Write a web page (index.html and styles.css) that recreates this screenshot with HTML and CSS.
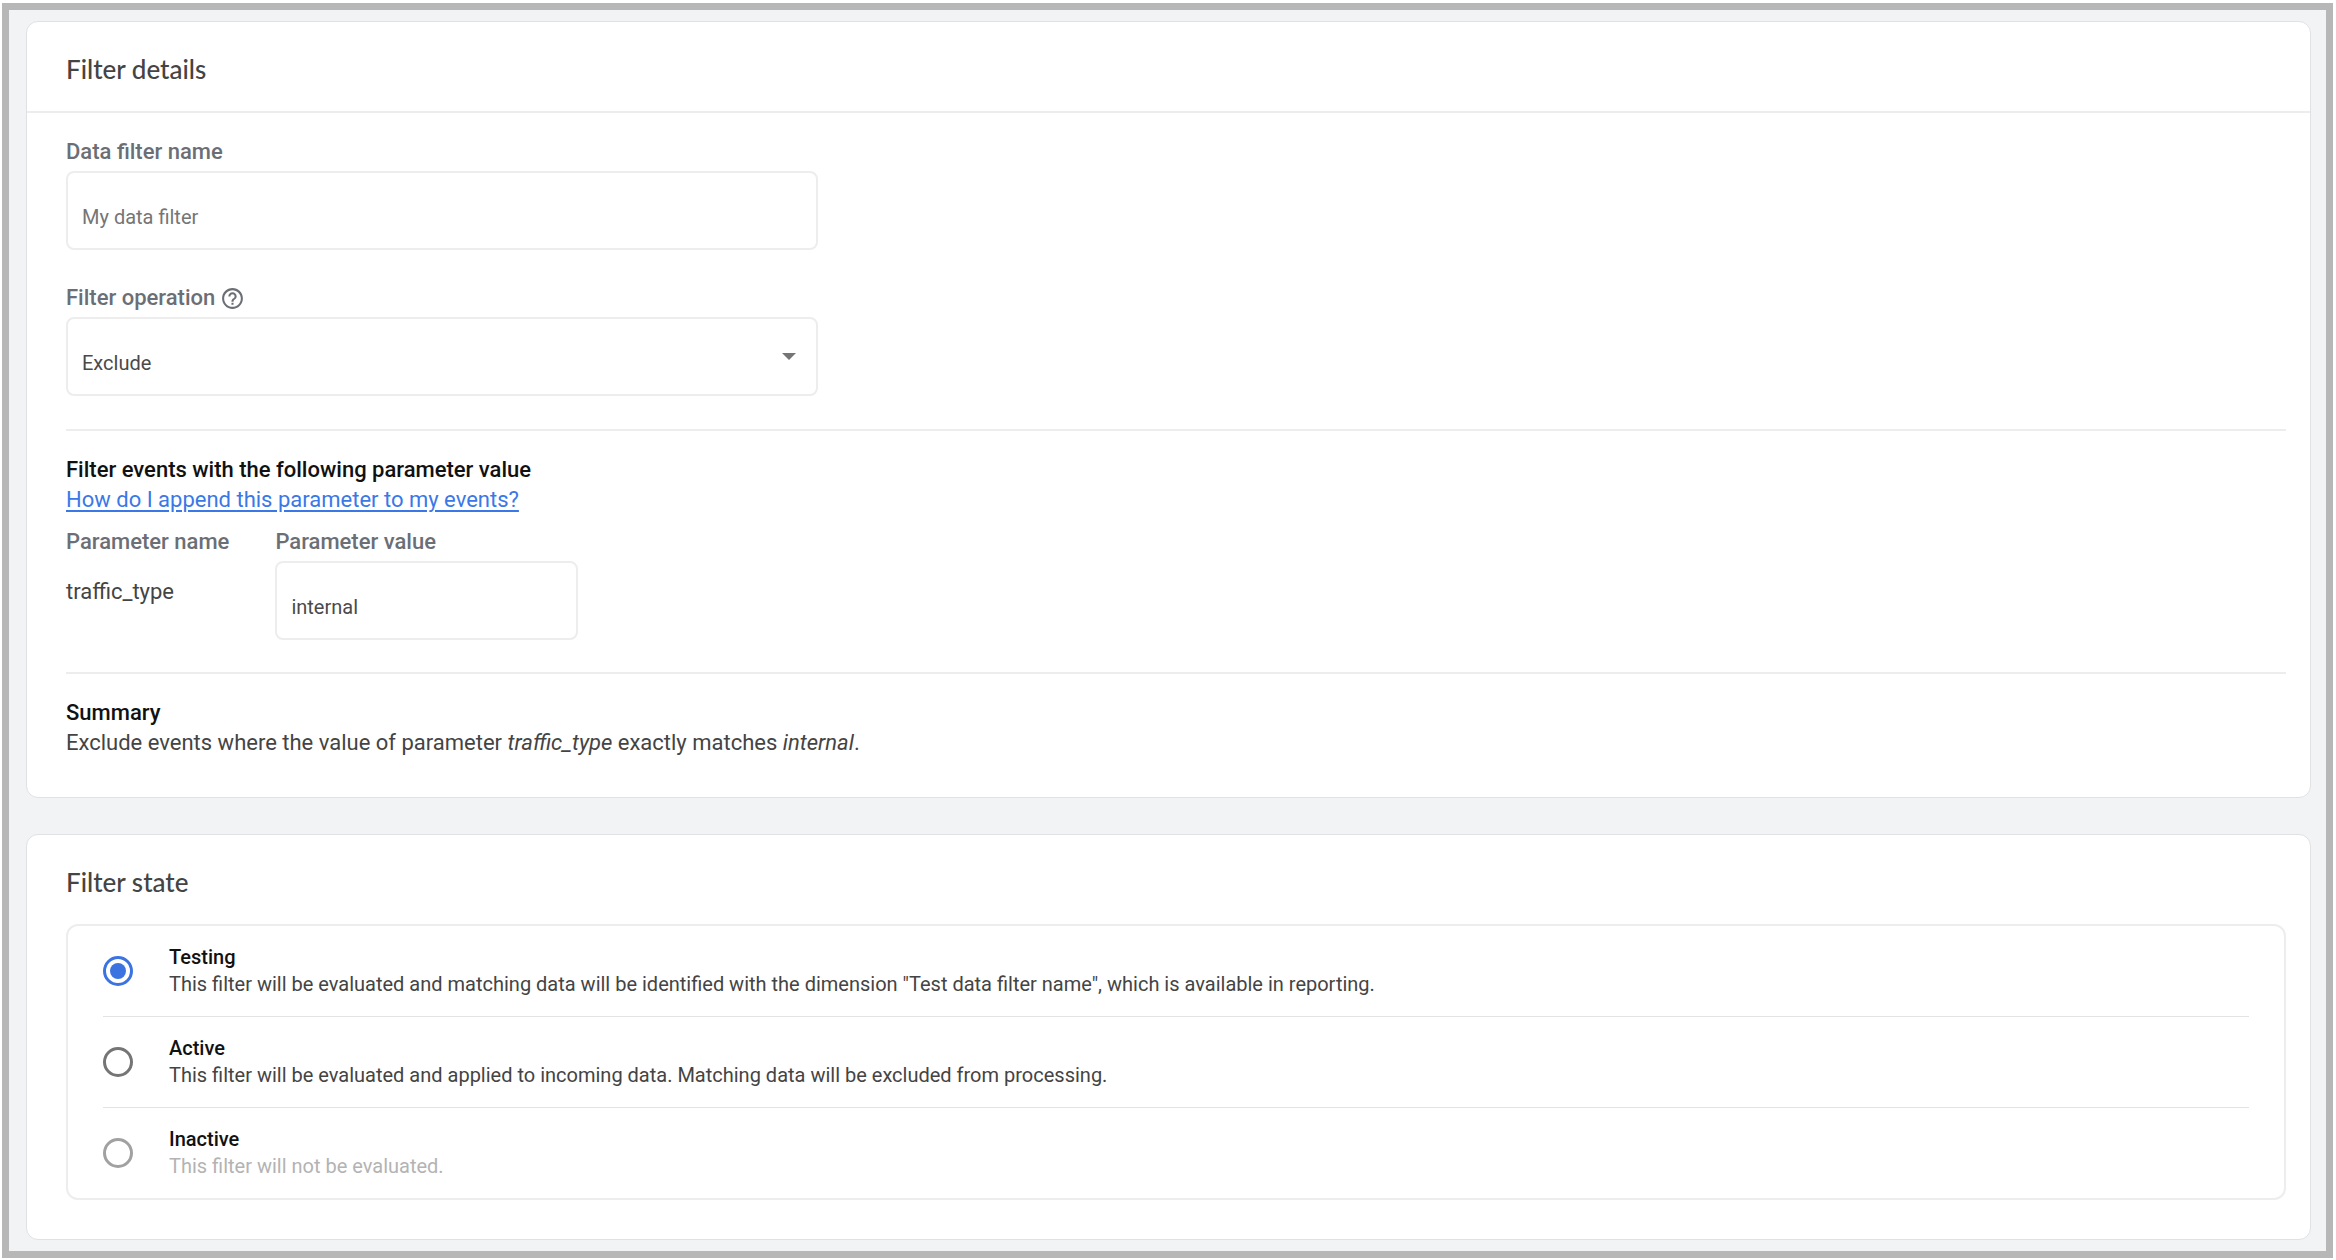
FILE: index.html
```html
<!DOCTYPE html>
<html lang="en">

<head>
    <meta charset="UTF-8">
    <meta name="viewport" content="width=device-width, initial-scale=1.0">
    <title>Data filter</title>
    <link rel="stylesheet" href="styles.css">
</head>

<body>
    <form class="page">
        <section class="card">
            <div class="card-header">
                <h2 class="card-title">Filter details</h2>
            </div>
            <div class="card-body">
                <div class="field">
                    <label class="label" for="filter-name">Data filter name</label>
                    <input class="input" type="text" id="filter-name" placeholder="My data filter">
                </div>
                <div class="field">
                    <div class="label-row">
                        <label class="label" for="filter-operation">Filter operation</label>
                        <button class="help" type="button" aria-label="Help">
                            <svg viewBox="0 0 24 24" width="25" height="25" fill="currentColor">
                                <path d="M11 18h2v-2h-2v2zm1-16C6.480 2 2 6.480 2 12s4.480 10 10 10 10-4.480 10-10S17.520 2 12 2zm0 18c-4.410 0-8-3.590-8-8s3.590-8 8-8 8 3.590 8 8-3.590 8-8 8zm0-14c-2.210 0-4 1.790-4 4h2c0-1.100.9-2 2-2s2 .9 2 2c0 2-3 1.750-3 5h2c0-2.250 3-2.500 3-5 0-2.210-1.790-4-4-4z" />
                            </svg>
                        </button>
                    </div>
                    <div class="select-wrap">
                        <select class="input" id="filter-operation">
                            <option>Exclude</option>
                        </select>
                        <svg class="arrow" viewBox="0 0 14 7" width="14" height="7">
                            <path d="M0 0h14L7 7z" fill="#757575" />
                        </svg>
                    </div>
                </div>

                <div class="group">
                    <h3 class="subtitle">Filter events with the following parameter value</h3>
                    <a class="link" href="#">How do I append this parameter to my events?</a>
                    <div class="params">
                        <div class="param-name">
                            <div class="label">Parameter name</div>
                            <div class="param-text">traffic_type</div>
                        </div>
                        <div class="param-value">
                            <label class="label" for="param-value">Parameter value</label>
                            <input class="input" type="text" id="param-value" value="internal">
                        </div>
                    </div>
                </div>

                <div class="group">
                    <h3 class="subtitle">Summary</h3>
                    <p class="summary">Exclude events where the value of parameter <em>traffic_type</em> exactly matches <em>internal</em>.</p>
                </div>
            </div>
        </section>

        <section class="card">
            <div class="card-header plain">
                <h2 class="card-title">Filter state</h2>
            </div>
            <div class="options">
                <div class="option">
                    <input class="radio" type="radio" name="state" id="testing" checked>
                    <label class="option-label" for="testing">
                        <strong>Testing</strong>
                        <span>This filter will be evaluated and matching data will be identified with the dimension "Test data filter name", which is available in reporting.</span>
                    </label>
                </div>
                <div class="option">
                    <input class="radio" type="radio" name="state" id="active">
                    <label class="option-label" for="active">
                        <strong>Active</strong>
                        <span>This filter will be evaluated and applied to incoming data. Matching data will be excluded from processing.</span>
                    </label>
                </div>
                <div class="option">
                    <input class="radio" type="radio" name="state" id="inactive" disabled>
                    <label class="option-label" for="inactive">
                        <strong>Inactive</strong>
                        <span>This filter will not be evaluated.</span>
                    </label>
                </div>
            </div>
        </section>
    </form>
</body>

</html>
```

FILE: styles.css
```css
* {
    box-sizing: border-box;
}

body {
    margin: 0;
    padding: 3px 3px 2px 2px;
    background-color: #fff;
    color: #444;
    font-family: Roboto, sans-serif;
    font-size: 20px;
    line-height: 30px;
}

.page {
    display: flex;
    flex-direction: column;
    gap: 36px;
    padding: 11px 15px 11px 17px;
    border: 7px solid #b7b7b7;
    background-color: #f1f3f4;
}

.card {
    border: 1px solid #dfe1e5;
    border-radius: 12px;
    background-color: #fff;
}

.card-header {
    padding: 32px 39px 27px;
    border-bottom: 2px solid #ededed;
}

.card-header.plain {
    border-bottom: none;
}

.card-title {
    margin: 0;
    font-family: Lato, sans-serif;
    font-size: 26px;
    font-weight: 500;
}

.card-body {
    padding: 24px 24px 39px 39px;
    font-size: 22px;
}

.field {
    max-width: 752px;
    margin-bottom: 33px;
}

.label-row {
    display: flex;
    align-items: center;
    gap: 5px;
}

.label {
    display: block;
    color: #6b6f75;
    font-weight: 500;
}

.help {
    display: flex;
    padding: 0;
    border: none;
    background: none;
    color: #6b6f75;
    cursor: pointer;
}

.input {
    display: block;
    width: 100%;
    height: 79px;
    margin-top: 4px;
    padding: 12px 14px 0;
    border: 2px solid #ededed;
    border-radius: 8px;
    background-color: #fff;
    color: #4a4a4a;
    font-family: inherit;
    font-size: 20px;
    appearance: none;
}

.input::placeholder {
    color: #757575;
    opacity: 1;
}

.select-wrap {
    position: relative;
}

.arrow {
    position: absolute;
    top: 36px;
    right: 22px;
    pointer-events: none;
}

.group {
    padding-top: 24px;
    border-top: 2px solid #ededed;
}

.subtitle {
    margin: 0;
    color: #111;
    font-size: 22px;
    font-weight: 500;
}

.link {
    color: #3b78e7;
    text-underline-offset: 3px;
}

.params {
    display: flex;
    gap: 46px;
    margin: 12px 0 32px;
}

.param-text {
    margin-top: 20px;
}

.param-value {
    width: 303px;
}

.summary {
    margin: 0;
}

.options {
    margin: 0 24px 39px 39px;
    padding: 0 35px;
    border: 2px solid #ededed;
    border-radius: 12px;
}

.option {
    display: flex;
    align-items: center;
    gap: 36px;
    padding: 18px 0;
    border-bottom: 1px solid #e3e3e3;
}

.option:last-child {
    border-bottom: none;
}

.radio {
    flex: none;
    display: grid;
    place-content: center;
    width: 30px;
    height: 30px;
    margin: 0;
    border: 3px solid #757575;
    border-radius: 50%;
    background-color: #fff;
    appearance: none;
}

.radio:checked {
    border-color: #3b73e0;
}

.radio:checked::before {
    content: "";
    width: 16px;
    height: 16px;
    border-radius: 50%;
    background-color: #3b73e0;
}

.radio:disabled {
    border-color: #a1a1a1;
}

.option-label {
    display: flex;
    flex-direction: column;
    line-height: 27px;
}

.option-label strong {
    color: #111;
    font-weight: 500;
}

.radio:disabled + .option-label span {
    color: #b3b3b3;
}
```
